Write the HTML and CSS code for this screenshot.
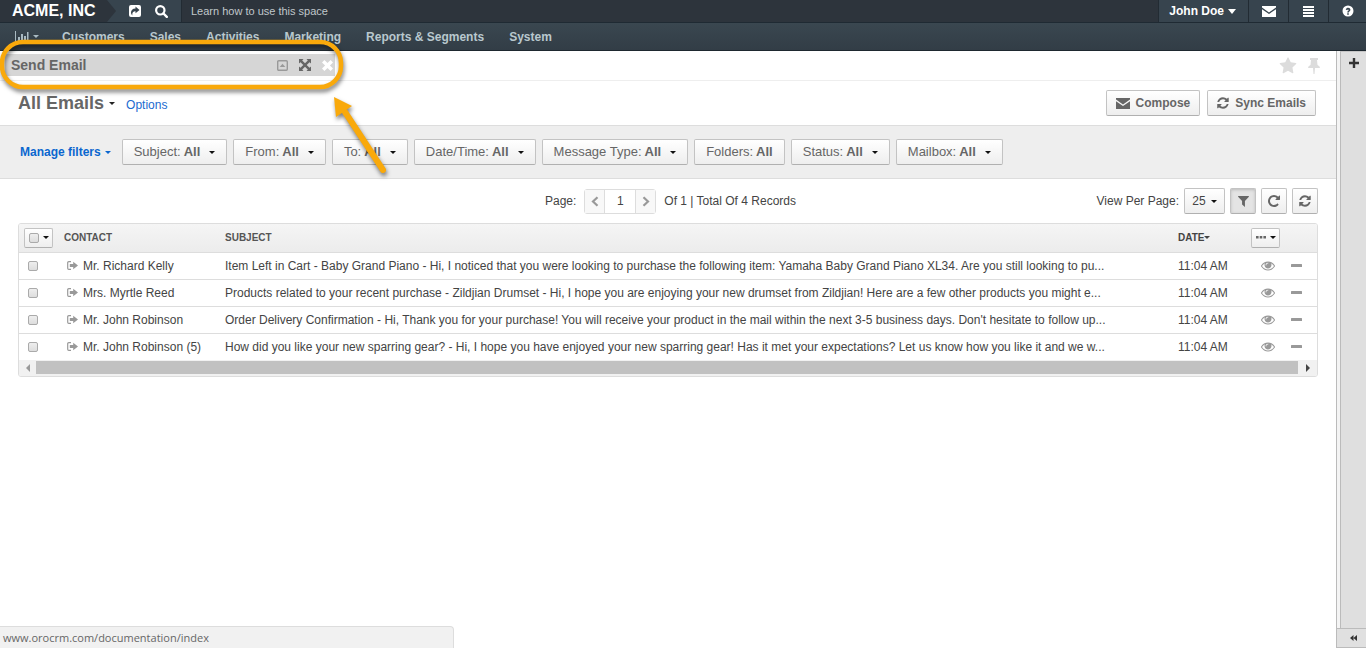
FILE: index.html
```html
<!DOCTYPE html>
<html lang="en">
<head>
<meta charset="utf-8">
<title>All Emails</title>
<link rel="stylesheet" href="styles.css">
</head>
<body>
<svg class="sprite" aria-hidden="true">
  <symbol id="share" viewBox="0 0 12 12"><path fill-rule="evenodd" d="M2 0h8a2 2 0 0 1 2 2v8a2 2 0 0 1-2 2H2a2 2 0 0 1-2-2V2a2 2 0 0 1 2-2zM6.500 1.500v2C3.500 3.500 2 5.200 2 7.500c0 1 .5 2.200 1.300 3C3 7.500 4.200 6.300 6.500 6.300v2L10.500 5z"/></symbol>
  <symbol id="search" viewBox="0 0 13 13"><circle cx="5.300" cy="5.300" r="4.200" fill="none" stroke="currentColor" stroke-width="2.200"/><path d="M8.500 8.500l3.300 3.300" stroke="currentColor" stroke-width="2.400" stroke-linecap="round"/></symbol>
  <symbol id="chart" viewBox="0 0 14 12"><path d="M0 0h1v11h13v1H0zM3 6h2v4H3zM6 3h2v7H6zM9 5h2v5H9zM12 1h1.500v9H12z"/></symbol>
  <symbol id="mail" viewBox="0 0 14 11"><path d="M0 0h14v1.500L7 6.500 0 1.500zM0 3.200L7 8l7-4.800V11H0z"/></symbol>
  <symbol id="menu" viewBox="0 0 11 11"><path d="M0 0h11v2H0zM0 3h11v2H0zM0 6h11v2H0zM0 9h11v2H0z"/></symbol>
  <symbol id="help" viewBox="0 0 12 12"><path fill-rule="evenodd" d="M6 .5a5.500 5.500 0 1 1 0 11a5.500 5.500 0 1 1 0-11zM3.700 4.500l1.400.7c.5-1 1.600-.7 1.500 0C6.500 5.800 5.200 6 5.200 7.500h1.600c0-.9 1.600-1.100 1.600-2.700C8.400 2.200 4.600 1.800 3.700 4.500zM5.200 8.200h1.600v1.500H5.200z"/></symbol>
  <symbol id="collapse" viewBox="0 0 11 11"><rect x=".7" y=".7" width="9.600" height="9.600" rx="1" fill="none" stroke="currentColor" stroke-width="1.400"/><path d="M2.700 7L5.500 3.800 8.300 7z"/></symbol>
  <symbol id="expand" viewBox="0 0 12 12"><path d="M0 0h4.500L3.200 1.500 6 4.300l2.800-2.800L7.500 0H12v4.500l-1.500-1.300L7.700 6l2.800 2.800L12 7.500V12H7.500l1.300-1.500L6 7.700l-2.800 2.800L4.500 12H0V7.500l1.500 1.300L4.300 6 1.500 3.200 0 4.500z"/></symbol>
  <symbol id="close" viewBox="0 0 10 10"><path d="M0 2.200L2.200 0 5 2.800 7.800 0 10 2.200 7.200 5 10 7.800 7.800 10 5 7.200 2.200 10 0 7.800 2.800 5z"/></symbol>
  <symbol id="star" viewBox="0 0 1792 1792"><path d="M1728 647q0 22-26 48l-363 354 86 500q1 7 1 20 0 21-10.500 35.500t-30.500 14.500q-19 0-40-12l-449-236-449 236q-22 12-40 12-21 0-31.500-14.500t-10.500-35.500q0-6 2-20l86-500-364-354q-25-27-25-48 0-37 56-46l502-73 225-455q19-41 49-41t49 41l225 455 502 73q56 9 56 46z"/></symbol>
  <symbol id="pin" viewBox="0 0 12 16"><path d="M2 0h8v2H9l.5 5Q12 8 12 10H7l-.5 6h-1L5 10H0Q0 8 2.500 7L3 2H2z"/></symbol>
  <symbol id="plus" viewBox="0 0 10 10"><path d="M3.800 0h2.400v3.800H10v2.400H6.200V10H3.800V6.200H0V3.800h3.800z"/></symbol>
  <symbol id="refresh" viewBox="100 128 1600 1536"><path d="M1639 1056q0 5-1 7-64 268-268 434.500t-478 166.500q-146 0-282.500-55t-243.500-157l-129 129q-19 19-45 19t-45-19-19-45v-448q0-26 19-45t45-19h448q26 0 45 19t19 45-19 45l-137 137q71 66 161 102t187 36q134 0 250-65t186-179q11-17 53-117 8-23 30-23h192q13 0 22.500 9.500t9.500 22.500zm25-800v448q0 26-19 45t-45 19h-448q-26 0-45-19t-19-45 19-45l138-138q-148-137-349-137-134 0-250 65t-186 179q-11 17-53 117-8 23-30 23h-199q-13 0-22.500-9.500t-9.500-22.500v-7q65-268 270-434.500t480-166.500q146 0 284 55.500t245 156.500l130-129q19-19 45-19t45 19 19 45z"/></symbol>
  <symbol id="redo" viewBox="128 128 1536 1536"><path d="M1664 256v448q0 26-19 45t-45 19h-448q-42 0-59-40-17-39 14-69l138-138q-148-137-349-137-104 0-198.500 40.500t-163.500 109.500-109.500 163.500-40.500 198.500 40.500 198.500 109.500 163.500 163.500 109.500 198.500 40.500q119 0 225-52t179-147q7-10 23-12 15 0 25 9l137 138q9 8 9.500 20.500t-7.500 22.500q-109 132-264 204.500t-327 72.500q-156 0-298-61t-245-164-164-245-61-298 61-298 164-245 245-164 298-61q147 0 284.500 55.500t244.500 156.500l130-129q29-31 70-14 39 17 39 59z"/></symbol>
  <symbol id="filter" viewBox="0 0 10 10"><path d="M.3 0h9.400q.5.500 0 1L6.300 4.500V10L3.700 7.800V4.500L.3 1q-.5-.5 0-1z"/></symbol>
  <symbol id="prev" viewBox="0 0 8 11"><path d="M6.500 1.200L2 5.500l4.500 4.300" fill="none" stroke="currentColor" stroke-width="2.200"/></symbol>
  <symbol id="next" viewBox="0 0 8 11"><path d="M1.500 1.200L6 5.500 1.500 9.800" fill="none" stroke="currentColor" stroke-width="2.200"/></symbol>
  <symbol id="out" viewBox="0 0 11 9"><path d="M4 .7H1.800Q.7.700.7 1.800v5.400q0 1.100 1.100 1.100H4" fill="none" stroke="currentColor" stroke-width="1.200"/><path d="M2.800 3h3.400V.7L11 4.500 6.200 8.300V6H2.800z"/></symbol>
  <symbol id="eye" viewBox="0 384 1792 1152"><path d="M1664 960q-152-236-381-353 61 104 61 225 0 185-131.500 316.500t-316.500 131.500-316.500-131.500-131.500-316.500q0-121 61-225-229 117-381 353 133 205 333.500 326.500t434.500 121.500 434.500-121.500 333.500-326.500zm-720-384q0-20-14-34t-34-14q-125 0-214.500 89.500t-89.500 214.500q0 20 14 34t34 14 34-14 14-34q0-86 61-147t147-61q20 0 34-14t14-34zm848 384q0 34-20 69-140 230-376.500 368.500t-499.500 138.500-499.500-139-376.500-368q-20-35-20-69t20-69q140-229 376.500-368t499.500-139 499.500 139 376.500 368q20 35 20 69z"/></symbol>
  <symbol id="minus" viewBox="0 0 11 3"><rect width="11" height="3" rx=".5"/></symbol>
  <symbol id="dots" viewBox="0 0 10 3"><path d="M0 0h2.600v2.600H0zM3.700 0h2.600v2.600H3.700zM7.400 0H10v2.600H7.400z"/></symbol>
  <symbol id="left" viewBox="0 0 4 8"><path d="M4 0v8L0 4z"/></symbol>
  <symbol id="right" viewBox="0 0 4 8"><path d="M0 0v8l4-4z"/></symbol>
  <symbol id="double-left" viewBox="0 0 7 6"><path d="M3.500 0v6L0 3zM7 0v6L3.500 3z"/></symbol>
</svg>

<header>
  <div class="topbar">
    <a class="brand" href="#">ACME, INC</a>
    <div class="quick">
      <button class="plain" aria-label="Share"><svg class="i12"><use href="#share"/></svg></button>
      <button class="plain" aria-label="Search"><svg class="i13"><use href="#search"/></svg></button>
    </div>
    <a class="learn" href="#">Learn how to use this space</a>
    <div class="user-tools">
      <button class="plain user">John Doe <i class="caret big"></i></button>
      <button class="plain tool" aria-label="Emails"><svg class="i-mail"><use href="#mail"/></svg></button>
      <button class="plain tool" aria-label="Menu"><svg class="i11"><use href="#menu"/></svg></button>
      <button class="plain tool" aria-label="Help"><svg class="i12"><use href="#help"/></svg></button>
    </div>
  </div>
  <nav class="mainnav">
    <a class="dash" href="#" aria-label="Dashboards"><svg class="i-chart"><use href="#chart"/></svg><i class="caret"></i></a>
    <a href="#">Customers</a>
    <a href="#">Sales</a>
    <a href="#">Activities</a>
    <a href="#">Marketing</a>
    <a href="#">Reports &amp; Segments</a>
    <a href="#">System</a>
  </nav>
</header>

<div class="body">
  <main>
    <div class="strip">
      <section class="dialog-bar">
        <h2>Send Email</h2>
        <button class="plain dim" aria-label="Collapse"><svg class="i11"><use href="#collapse"/></svg></button>
        <button class="plain" aria-label="Expand"><svg class="i12"><use href="#expand"/></svg></button>
        <button class="plain close" aria-label="Close"><svg class="i11"><use href="#close"/></svg></button>
      </section>
      <div class="marks">
        <button class="plain" aria-label="Favorite"><svg class="i-star"><use href="#star"/></svg></button>
        <button class="plain" aria-label="Pin"><svg class="i-pin"><use href="#pin"/></svg></button>
      </div>
    </div>

    <div class="titlebar">
      <h1>All Emails</h1><i class="caret"></i>
      <a class="options" href="#">Options</a>
      <div class="actions">
        <button class="btn action"><svg class="i-mail"><use href="#mail"/></svg>Compose</button>
        <button class="btn action"><svg class="i12"><use href="#refresh"/></svg>Sync Emails</button>
      </div>
    </div>

    <div class="filters">
      <button class="plain manage">Manage filters <i class="caret"></i></button>
      <button class="btn filter">Subject: <b>All</b><i class="caret"></i></button>
      <button class="btn filter">From: <b>All</b><i class="caret"></i></button>
      <button class="btn filter">To: <b>All</b><i class="caret"></i></button>
      <button class="btn filter">Date/Time: <b>All</b><i class="caret"></i></button>
      <button class="btn filter">Message Type: <b>All</b><i class="caret"></i></button>
      <button class="btn filter">Folders: <b>All</b></button>
      <button class="btn filter">Status: <b>All</b><i class="caret"></i></button>
      <button class="btn filter">Mailbox: <b>All</b><i class="caret"></i></button>
    </div>

    <div class="pager">
      <div class="pages">
        <label for="page">Page:</label>
        <div class="stepper">
          <button aria-label="Previous page"><svg class="i-step"><use href="#prev"/></svg></button>
          <input id="page" type="text" value="1">
          <button aria-label="Next page"><svg class="i-step"><use href="#next"/></svg></button>
        </div>
        <span>Of 1 | Total Of 4 Records</span>
      </div>
      <div class="view">
        <span>View Per Page:</span>
        <button class="btn size">25 <i class="caret"></i></button>
        <button class="btn square pressed" aria-label="Filters"><svg class="i11"><use href="#filter"/></svg></button>
        <button class="btn square" aria-label="Refresh"><svg class="i12"><use href="#redo"/></svg></button>
        <button class="btn square" aria-label="Reset"><svg class="i12"><use href="#refresh"/></svg></button>
      </div>
    </div>

    <div class="grid">
      <table>
        <colgroup><col class="c-check"><col class="c-contact"><col><col class="c-date"><col class="c-act"></colgroup>
        <thead>
          <tr>
            <th><span class="btn mini"><input type="checkbox" aria-label="Select all"><i class="caret"></i></span></th>
            <th>CONTACT</th>
            <th>SUBJECT</th>
            <th><span class="sort">DATE<i class="caret"></i></span></th>
            <th><button class="btn mini" aria-label="Columns"><svg class="i-dots"><use href="#dots"/></svg><i class="caret"></i></button></th>
          </tr>
        </thead>
        <tbody>
          <tr>
            <td><input type="checkbox" aria-label="Select row"></td>
            <td><span class="contact"><svg class="i-out"><use href="#out"/></svg>Mr. Richard Kelly</span></td>
            <td>Item Left in Cart - Baby Grand Piano - Hi, I noticed that you were looking to purchase the following item: Yamaha Baby Grand Piano XL34. Are you still looking to pu...</td>
            <td>11:04 AM</td>
            <td><div class="acts"><button class="plain" aria-label="View"><svg class="i-eye"><use href="#eye"/></svg></button><button class="plain" aria-label="Remove"><svg class="i-minus"><use href="#minus"/></svg></button></div></td>
          </tr>
          <tr>
            <td><input type="checkbox" aria-label="Select row"></td>
            <td><span class="contact"><svg class="i-out"><use href="#out"/></svg>Mrs. Myrtle Reed</span></td>
            <td>Products related to your recent purchase - Zildjian Drumset - Hi, I hope you are enjoying your new drumset from Zildjian! Here are a few other products you might e...</td>
            <td>11:04 AM</td>
            <td><div class="acts"><button class="plain" aria-label="View"><svg class="i-eye"><use href="#eye"/></svg></button><button class="plain" aria-label="Remove"><svg class="i-minus"><use href="#minus"/></svg></button></div></td>
          </tr>
          <tr>
            <td><input type="checkbox" aria-label="Select row"></td>
            <td><span class="contact"><svg class="i-out"><use href="#out"/></svg>Mr. John Robinson</span></td>
            <td>Order Delivery Confirmation - Hi, Thank you for your purchase! You will receive your product in the mail within the next 3-5 business days. Don't hesitate to follow up...</td>
            <td>11:04 AM</td>
            <td><div class="acts"><button class="plain" aria-label="View"><svg class="i-eye"><use href="#eye"/></svg></button><button class="plain" aria-label="Remove"><svg class="i-minus"><use href="#minus"/></svg></button></div></td>
          </tr>
          <tr>
            <td><input type="checkbox" aria-label="Select row"></td>
            <td><span class="contact"><svg class="i-out"><use href="#out"/></svg>Mr. John Robinson (5)</span></td>
            <td>How did you like your new sparring gear? - Hi, I hope you have enjoyed your new sparring gear! Has it met your expectations? Let us know how you like it and we w...</td>
            <td>11:04 AM</td>
            <td><div class="acts"><button class="plain" aria-label="View"><svg class="i-eye"><use href="#eye"/></svg></button><button class="plain" aria-label="Remove"><svg class="i-minus"><use href="#minus"/></svg></button></div></td>
          </tr>
        </tbody>
      </table>
      <div class="scroll">
        <button class="plain" aria-label="Scroll left"><svg class="i-arrow faded"><use href="#left"/></svg></button>
        <div class="thumb"></div>
        <button class="plain" aria-label="Scroll right"><svg class="i-arrow"><use href="#right"/></svg></button>
      </div>
    </div>
  </main>
  <aside>
    <div class="dock"><button class="plain" aria-label="Add widget"><svg class="i-plus"><use href="#plus"/></svg></button></div>
    <button class="plain dock-toggle" aria-label="Expand sidebar"><svg class="i-double"><use href="#double-left"/></svg></button>
  </aside>
</div>

<div class="status">www.orocrm.com/documentation/index</div>

<svg class="callout" width="400" height="190" aria-hidden="true">
  <rect x="2" y="42" width="339" height="45" rx="21" fill="none" stroke="#f9a90b" stroke-width="4.500"/>
  <path d="M345 112l38 58" stroke="#f9a90b" stroke-width="6" stroke-linecap="round"/>
  <path d="M334 97l18 9-16 11z" fill="#f9a90b"/>
</svg>
</body>
</html>
```

FILE: styles.css
```css
* { box-sizing: border-box; }

body {
  margin: 0;
  min-height: 100vh;
  display: flex;
  flex-direction: column;
  background: #fff;
  color: #444;
  font: 12px/16px "Liberation Sans", Arial, sans-serif;
}

a { text-decoration: none; }
button, input { font: inherit; margin: 0; }
svg { display: block; fill: currentColor; }
.sprite { position: absolute; width: 0; height: 0; }

.plain {
  display: flex;
  align-items: center;
  padding: 0;
  border: 0;
  background: none;
  color: inherit;
}

.i11 { width: 11px; height: 11px; }
.i12 { width: 12px; height: 12px; }
.i13 { width: 13px; height: 13px; }
.i-mail { width: 14px; height: 11px; }
.i-chart { width: 14px; height: 12px; }
.i-star { width: 18px; height: 18px; }
.i-pin { width: 12px; height: 16px; }
.i-plus { width: 10px; height: 10px; }
.i-step { width: 8px; height: 11px; }
.i-out { width: 11px; height: 9px; color: #999; }
.i-eye { width: 14px; height: 10px; }
.i-minus { width: 11px; height: 3px; }
.i-dots { width: 10px; height: 3px; }
.i-arrow { width: 4px; height: 8px; color: #444; }
.i-arrow.faded { color: #999; }
.i-double { width: 7px; height: 6px; }

.caret {
  display: inline-block;
  border: 3px solid transparent;
  border-top-color: currentColor;
  border-bottom: 0;
}
.caret.big { border-width: 5px 4px 0; }

/* Header */
.topbar {
  display: flex;
  height: 23px;
  background: #2d343c;
  border-bottom: 1px solid #1f2a33;
  color: #fff;
}
.brand {
  position: relative;
  z-index: 1;
  width: 116px;
  padding: 2px 12px 0;
  background: #2d343c;
  clip-path: polygon(0 0, 107px 0, 100% 50%, 107px 100%, 0 100%);
  color: #fff;
  font-size: 16px;
  line-height: 18px;
  font-weight: bold;
}
.quick {
  display: flex;
  align-items: center;
  gap: 14px;
  margin-left: -116px;
  padding: 0 13px 0 129px;
  background: #37444e;
  border-right: 1px solid #222b33;
}
.learn { padding: 3px 9px; color: #c0c7cb; font-size: 11px; }
.user-tools { display: flex; margin-left: auto; background: #37444e; }
.user { padding: 0 12px 0 10px; gap: 4px; border-left: 1px solid #222b33; font-weight: bold; }
.tool { width: 40px; justify-content: center; border-left: 1px solid #222b33; }
.tool:last-child { width: 38px; }

.mainnav {
  display: flex;
  align-items: center;
  gap: 25px;
  height: 28px;
  padding: 0 15px;
  background: linear-gradient(#3a4750, #323d46);
  border-bottom: 1px solid #1e282f;
  color: #b9c8ce;
  font-weight: bold;
}
.mainnav a { color: inherit; }
.mainnav .dash { display: flex; align-items: center; gap: 4px; width: 22px; color: #a9bac2; }
.dash svg { flex: none; }
.dash .caret { flex: none; }

/* Page frame */
.body { display: flex; flex: 1; }
main { flex: 1; min-width: 0; }
aside {
  display: flex;
  flex-direction: column;
  width: 30px;
  border-left: 1px solid #bbb;
  background: #f4f4f4;
}
.dock {
  flex: 1;
  margin-left: 3px;
  padding: 6px 8px;
  background: #dfdfdf;
  border-left: 1px solid #bbb;
  border-top: 1px solid #c5c5c5;
  color: #333;
}
.dock-toggle { height: 20px; padding-left: 13px; background: #e0e0e0; border-top: 1px solid #bbb; border-bottom: 1px solid #bbb; color: #333; }

.strip {
  display: flex;
  justify-content: space-between;
  align-items: flex-start;
  height: 30px;
  padding: 3px 16px 0 5px;
  border-bottom: 1px solid #eee;
}
.dialog-bar {
  display: flex;
  align-items: center;
  gap: 11px;
  width: 330px;
  height: 22px;
  padding: 0 2px 0 6px;
  background: #d6d6d6;
  color: #666;
}
.dialog-bar h2 { flex: 1; margin: 0; font-size: 14px; }
.dialog-bar .dim { color: #999; }
.dialog-bar .close { color: #fff; }
.marks { display: flex; gap: 11px; padding-top: 3px; color: #dcdcdc; }

.titlebar { display: flex; align-items: center; height: 45px; padding: 0 20px 0 18px; border-bottom: 1px solid #ddd; }
.titlebar h1 { margin: 0 5px 0 0; color: #666; font-size: 18px; line-height: 22px; }
.titlebar > .caret { color: #222; }
.options { margin-left: 11px; padding-top: 3px; color: #1b6bd0; }
.actions { display: flex; gap: 7px; margin-left: auto; }

.btn {
  display: flex;
  align-items: center;
  justify-content: center;
  height: 26px;
  padding: 0 10px;
  border: 1px solid #c3c3c3;
  border-bottom-color: #b0b0b0;
  border-radius: 2px;
  background: linear-gradient(#fff, #eee);
  color: #666;
}
.btn .caret { color: #111; }
.action { gap: 6px; padding: 0 9px; font-weight: bold; }

.filters { display: flex; flex-wrap: wrap; align-items: center; gap: 6px; padding: 13px 20px; background: #eee; border-bottom: 1px solid #ddd; }
.manage { gap: 4px; margin-right: 5px; color: #0b67cf; font-weight: bold; }
.filter { gap: 3px; padding: 0 11px; font-size: 13px; }
.filter .caret { margin-left: 6px; }

.pager { display: grid; grid-template-columns: 527px 1fr auto; align-items: center; padding: 9px 18px; }
.pages { grid-column: 2; display: flex; align-items: center; gap: 8px; }
.stepper { display: flex; height: 25px; border: 1px solid #ddd; border-radius: 3px; }
.stepper button { display: flex; align-items: center; justify-content: center; width: 19px; padding: 0; border: 0; background: #f8f8f8; color: #999; }
.stepper input { width: 32px; padding: 0; border: 1px solid #ddd; border-width: 0 1px; text-align: center; color: #444; }
.view { display: flex; align-items: center; gap: 5px; }
.size { width: 41px; padding: 0; gap: 5px; color: #444; }
.square { width: 26px; padding: 0; }
.pressed { background: #e4e4e4; box-shadow: inset 0 1px 3px #bbb; }

/* Records */
.grid { margin: 0 18px; border: 1px solid #ddd; border-radius: 3px; overflow: hidden; }
table { width: 100%; border-collapse: collapse; table-layout: fixed; }
.c-check { width: 40px; }
.c-contact { width: 161px; }
.c-date { width: 73px; }
.c-act { width: 71px; }
th { height: 28px; padding: 0 5px; background: linear-gradient(#f5f5f5, #ececec); border-bottom: 1px solid #ddd; font-size: 10px; text-align: left; color: #555; font-weight: bold; }
td { height: 27px; padding: 0 5px; border-bottom: 1px solid #ddd; white-space: nowrap; }
tbody tr:last-child td { border-bottom: 0; }
td:first-child { padding-left: 9px; }
.sort { display: flex; align-items: center; color: #444; }
.mini { width: 29px; height: 20px; padding: 0; gap: 4px; }
.contact { display: flex; align-items: center; gap: 5px; padding-left: 3px; }
.acts { display: flex; align-items: center; gap: 16px; padding-left: 10px; color: #999; }

input[type="checkbox"] {
  appearance: none;
  display: block;
  width: 10px;
  height: 10px;
  border: 1px solid #aaa;
  border-radius: 2px;
  background: linear-gradient(#eee, #ddd);
}

.scroll { display: flex; height: 16px; background: #f1f1f1; padding: 1px 0 2px; }
.scroll button { width: 17px; justify-content: center; }
.scroll button:last-child { width: 19px; }
.thumb { flex: 1; background: #c1c1c1; }

/* Link preview and callout float over the page */
.status {
  position: fixed;
  left: 0;
  bottom: 0;
  width: 454px;
  padding: 3px 3px 2px;
  background: #f1f1f1;
  border: 1px solid #ddd;
  border-width: 1px 1px 0 0;
  border-top-right-radius: 4px;
  color: #666;
  font-family: "Open Sans", "Noto Sans", sans-serif;
  font-size: 11px;
}
.callout { position: absolute; top: 0; left: 0; pointer-events: none; filter: drop-shadow(1px 3px 2px rgba(0, 0, 0, .5)); }
```
